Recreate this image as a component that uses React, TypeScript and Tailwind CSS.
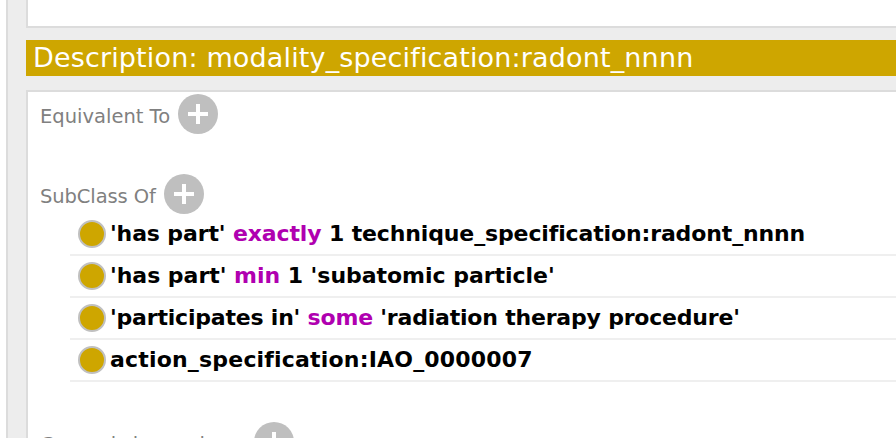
const font = "font-['DejaVu_Sans',sans-serif]";

type Token = { text: string; keyword?: boolean };

const rows: { tracking: string; tokens: Token[] }[] = [
  {
    tracking: "tracking-[-0.13px]",
    tokens: [
      { text: "'has part' " },
      { text: "exactly", keyword: true },
      { text: " 1 technique_specification:radont_nnnn" },
    ],
  },
  {
    tracking: "tracking-[-0.03px]",
    tokens: [
      { text: "'has part' " },
      { text: "min", keyword: true },
      { text: " 1 'subatomic particle'" },
    ],
  },
  {
    tracking: "tracking-[-0.2px]",
    tokens: [
      { text: "'participates in' " },
      { text: "some", keyword: true },
      { text: " 'radiation therapy procedure'" },
    ],
  },
  {
    tracking: "tracking-[0.19px]",
    tokens: [{ text: "action_specification:IAO_0000007" }],
  },
];

function AddButton() {
  return (
    <div className="flex h-10 w-10 shrink-0 items-center justify-center rounded-full bg-[#bfbfbf]">
      <svg width="20" height="20" viewBox="0 0 20 20">
        <path d="M8 0h4v8h8v4h-8v8H8v-8H0V8h8z" fill="#ffffff" />
      </svg>
    </div>
  );
}

function SectionHeader({ label, className = "" }: { label: string; className?: string }) {
  return (
    <div className={`flex h-10 items-center gap-2 pl-3 ${className}`}>
      <span className="mt-1.5 whitespace-nowrap text-[19.5px] text-[#808080]">{label}</span>
      <AddButton />
    </div>
  );
}

function AxiomRow({ tokens, tracking }: { tokens: Token[]; tracking: string }) {
  return (
    <div className="flex h-[42px] items-center border-b-2 border-[#efefef] pl-2">
      <div className="h-7 w-7 shrink-0 rounded-full border-2 border-[#c0c0c0] bg-[#cea600]" />
      <div className={`-mt-0.5 ml-1 whitespace-pre text-[22px] font-bold text-black ${tracking}`}>
        {tokens.map((token, index) => (
          <span key={index} className={token.keyword ? "text-[#b000b0]" : ""}>
            {token.text}
          </span>
        ))}
      </div>
    </div>
  );
}

export default function App() {
  return (
    <div className={`flex h-[438px] w-[896px] overflow-hidden bg-white ${font}`}>
      <div className="w-1.5 shrink-0 bg-white" />
      <div className="flex-1 border-l-2 border-[#dcdcdc] bg-[#ededed] pl-[18px]">
        <div className="h-7 border-b-2 border-l-2 border-[#dcdcdc] bg-white" />
        <div className="mt-3 flex h-9 items-center bg-[#cea600] pl-[7px] text-[27px] tracking-[0.15px] text-white">
          Description: modality_specification:radont_nnnn
        </div>
        <div className="mt-[14px] h-[400px] border-t-2 border-l-2 border-[#dcdcdc] bg-white pt-0.5">
          <SectionHeader label="Equivalent To" />
          <SectionHeader label="SubClass Of" className="mt-10 tracking-[-0.1px]" />
          <div className="ml-[42px]">
            {rows.map((row, index) => (
              <AxiomRow key={index} tokens={row.tokens} tracking={row.tracking} />
            ))}
          </div>
          <SectionHeader label="General class axioms" className="mt-10 tracking-[-0.1px]" />
        </div>
      </div>
    </div>
  );
}
